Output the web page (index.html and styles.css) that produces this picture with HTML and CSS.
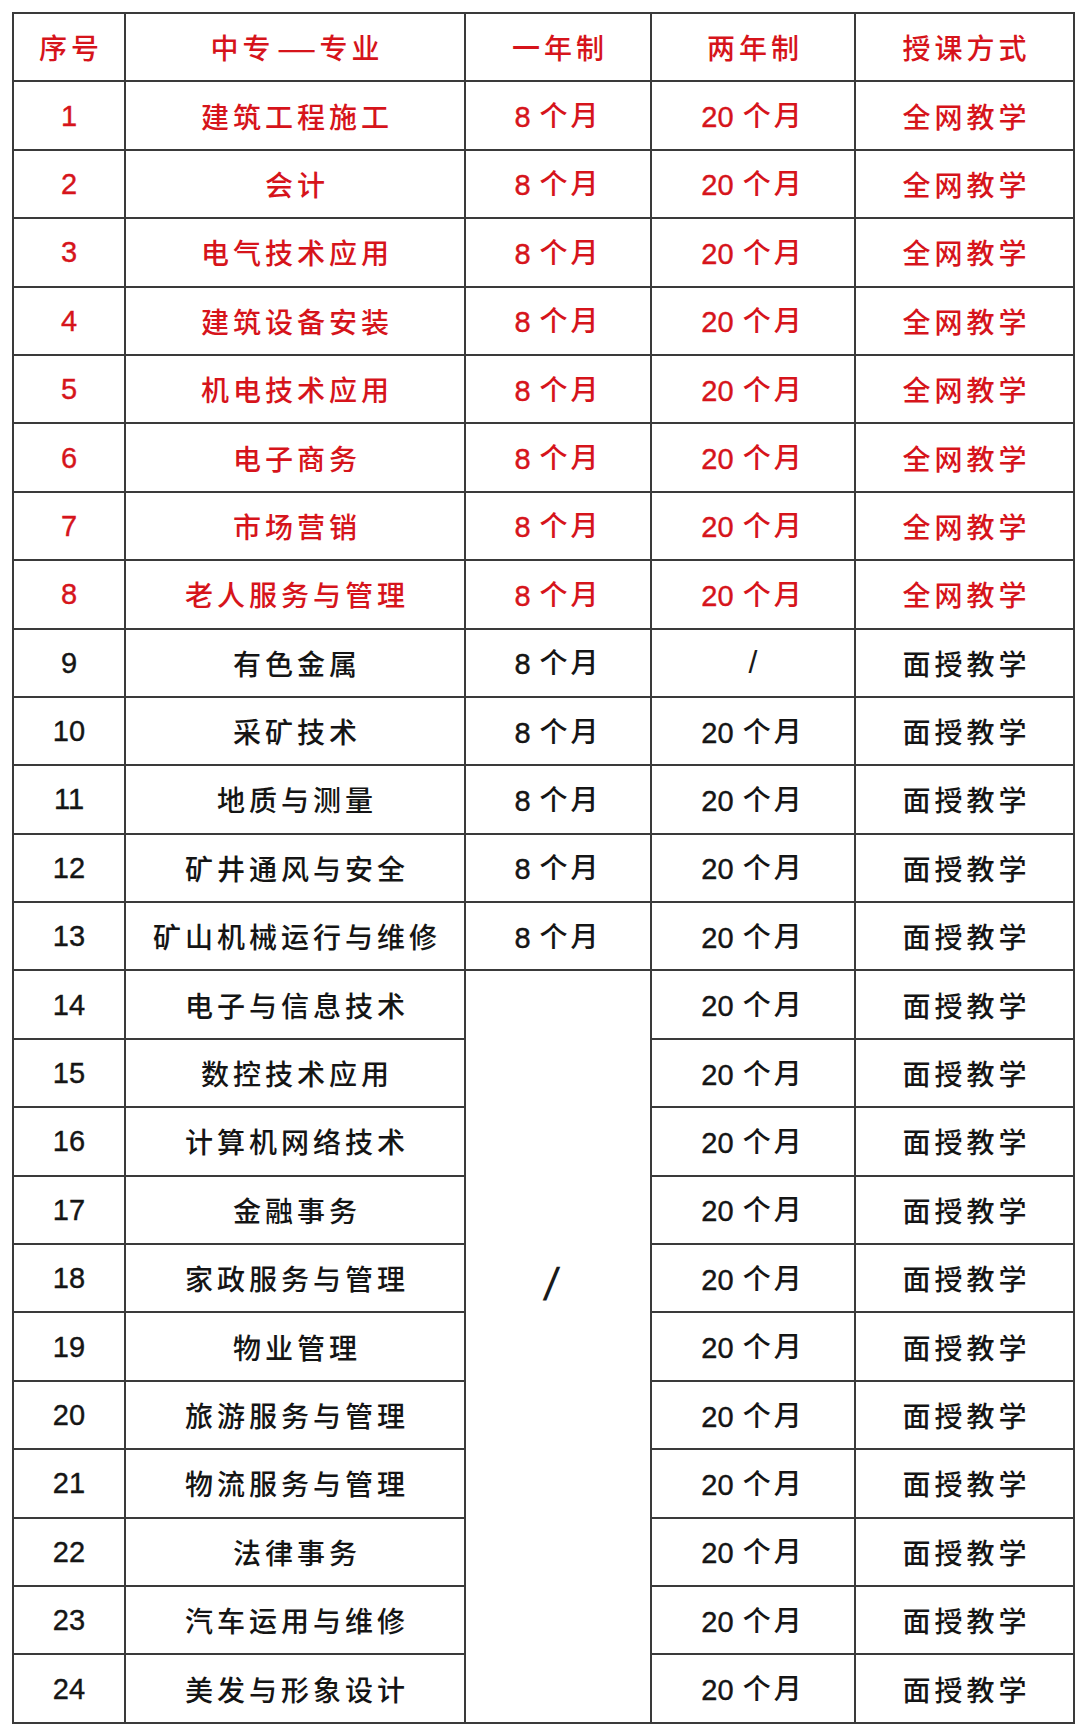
FILE: index.html
```html
<!DOCTYPE html>
<html lang="zh-CN">
<head>
<meta charset="utf-8">
<title>中专专业</title>
<link rel="stylesheet" href="styles.css">
</head>
<body>
<table class="grid">
  <colgroup>
    <col class="c-no">
    <col class="c-major">
    <col class="c-one">
    <col class="c-two">
    <col class="c-mode">
  </colgroup>
  <thead>
    <tr class="red">
      <th class="cn">序号</th>
      <th class="cn">中专<span class="dash">—</span>专业</th>
      <th class="cn">一年制</th>
      <th class="cn">两年制</th>
      <th class="cn">授课方式</th>
    </tr>
  </thead>
  <tbody>
    <tr class="red"><td>1</td><td class="cn">建筑工程施工</td><td>8 <span class="cn">个月</span></td><td>20 <span class="cn">个月</span></td><td class="cn">全网教学</td></tr>
    <tr class="red"><td>2</td><td class="cn">会计</td><td>8 <span class="cn">个月</span></td><td>20 <span class="cn">个月</span></td><td class="cn">全网教学</td></tr>
    <tr class="red"><td>3</td><td class="cn">电气技术应用</td><td>8 <span class="cn">个月</span></td><td>20 <span class="cn">个月</span></td><td class="cn">全网教学</td></tr>
    <tr class="red"><td>4</td><td class="cn">建筑设备安装</td><td>8 <span class="cn">个月</span></td><td>20 <span class="cn">个月</span></td><td class="cn">全网教学</td></tr>
    <tr class="red"><td>5</td><td class="cn">机电技术应用</td><td>8 <span class="cn">个月</span></td><td>20 <span class="cn">个月</span></td><td class="cn">全网教学</td></tr>
    <tr class="red"><td>6</td><td class="cn">电子商务</td><td>8 <span class="cn">个月</span></td><td>20 <span class="cn">个月</span></td><td class="cn">全网教学</td></tr>
    <tr class="red"><td>7</td><td class="cn">市场营销</td><td>8 <span class="cn">个月</span></td><td>20 <span class="cn">个月</span></td><td class="cn">全网教学</td></tr>
    <tr class="red"><td>8</td><td class="cn">老人服务与管理</td><td>8 <span class="cn">个月</span></td><td>20 <span class="cn">个月</span></td><td class="cn">全网教学</td></tr>
    <tr><td>9</td><td class="cn">有色金属</td><td>8 <span class="cn">个月</span></td><td><span class="slash-sm">/</span></td><td class="cn">面授教学</td></tr>
    <tr><td>10</td><td class="cn">采矿技术</td><td>8 <span class="cn">个月</span></td><td>20 <span class="cn">个月</span></td><td class="cn">面授教学</td></tr>
    <tr><td>11</td><td class="cn">地质与测量</td><td>8 <span class="cn">个月</span></td><td>20 <span class="cn">个月</span></td><td class="cn">面授教学</td></tr>
    <tr><td>12</td><td class="cn">矿井通风与安全</td><td>8 <span class="cn">个月</span></td><td>20 <span class="cn">个月</span></td><td class="cn">面授教学</td></tr>
    <tr><td>13</td><td class="cn">矿山机械运行与维修</td><td>8 <span class="cn">个月</span></td><td>20 <span class="cn">个月</span></td><td class="cn">面授教学</td></tr>
    <tr><td>14</td><td class="cn">电子与信息技术</td><td rowspan="11" class="merged"><span class="slash-lg">/</span></td><td>20 <span class="cn">个月</span></td><td class="cn">面授教学</td></tr>
    <tr><td>15</td><td class="cn">数控技术应用</td><td>20 <span class="cn">个月</span></td><td class="cn">面授教学</td></tr>
    <tr><td>16</td><td class="cn">计算机网络技术</td><td>20 <span class="cn">个月</span></td><td class="cn">面授教学</td></tr>
    <tr><td>17</td><td class="cn">金融事务</td><td>20 <span class="cn">个月</span></td><td class="cn">面授教学</td></tr>
    <tr><td>18</td><td class="cn">家政服务与管理</td><td>20 <span class="cn">个月</span></td><td class="cn">面授教学</td></tr>
    <tr><td>19</td><td class="cn">物业管理</td><td>20 <span class="cn">个月</span></td><td class="cn">面授教学</td></tr>
    <tr><td>20</td><td class="cn">旅游服务与管理</td><td>20 <span class="cn">个月</span></td><td class="cn">面授教学</td></tr>
    <tr><td>21</td><td class="cn">物流服务与管理</td><td>20 <span class="cn">个月</span></td><td class="cn">面授教学</td></tr>
    <tr><td>22</td><td class="cn">法律事务</td><td>20 <span class="cn">个月</span></td><td class="cn">面授教学</td></tr>
    <tr><td>23</td><td class="cn">汽车运用与维修</td><td>20 <span class="cn">个月</span></td><td class="cn">面授教学</td></tr>
    <tr><td>24</td><td class="cn">美发与形象设计</td><td>20 <span class="cn">个月</span></td><td class="cn">面授教学</td></tr>
  </tbody>
</table>
</body>
</html>
```

FILE: styles.css
```css
html, body {
  margin: 0;
  padding: 0;
  background: #ffffff;
}

body {
  padding: 12px 0 0 12px;
  font-family: "Liberation Sans", "Noto Sans CJK SC", sans-serif;
  color: #151515;
}

.grid {
  border-collapse: collapse;
  table-layout: fixed;
  width: 1061px;
}

.c-no { width: 112px; }
.c-major { width: 340px; }
.c-one { width: 186px; }
.c-two { width: 204px; }
.c-mode { width: 219px; }

.grid th,
.grid td {
  border: 2px solid #3a3a3a;
  height: 66.4px;
  padding: 0;
  text-align: center;
  vertical-align: middle;
  font-size: 29px;
  font-weight: normal;
  line-height: 32px;
  white-space: nowrap;
  -webkit-text-stroke: 0.4px currentColor;
}

.grid .cn {
  font-family: "Noto Sans CJK SC", sans-serif;
  font-weight: 500;
  font-size: 28px;
  letter-spacing: 4px;
  text-indent: 4px;
  -webkit-text-stroke: 0;
}

.grid span.cn {
  text-indent: 0;
  letter-spacing: 3px;
  margin-left: 1px;
  vertical-align: 1px;
}

.dash {
  display: inline-block;
  transform: scaleX(1.6);
  margin: 0 6px;
}

.red th,
.red td {
  color: #d6141b;
}

.grid .merged {
  vertical-align: top;
  padding-top: 290px;
}

.slash-lg {
  display: inline-block;
  font-size: 46px;
  line-height: 46px;
  transform: translateX(-7px) skewX(-8deg);
  color: #1a1a1a;
  -webkit-text-stroke: 0;
}

.slash-sm {
  display: inline-block;
  font-size: 32px;
  line-height: 32px;
  color: #1a1a1a;
  -webkit-text-stroke: 0;
}
```
